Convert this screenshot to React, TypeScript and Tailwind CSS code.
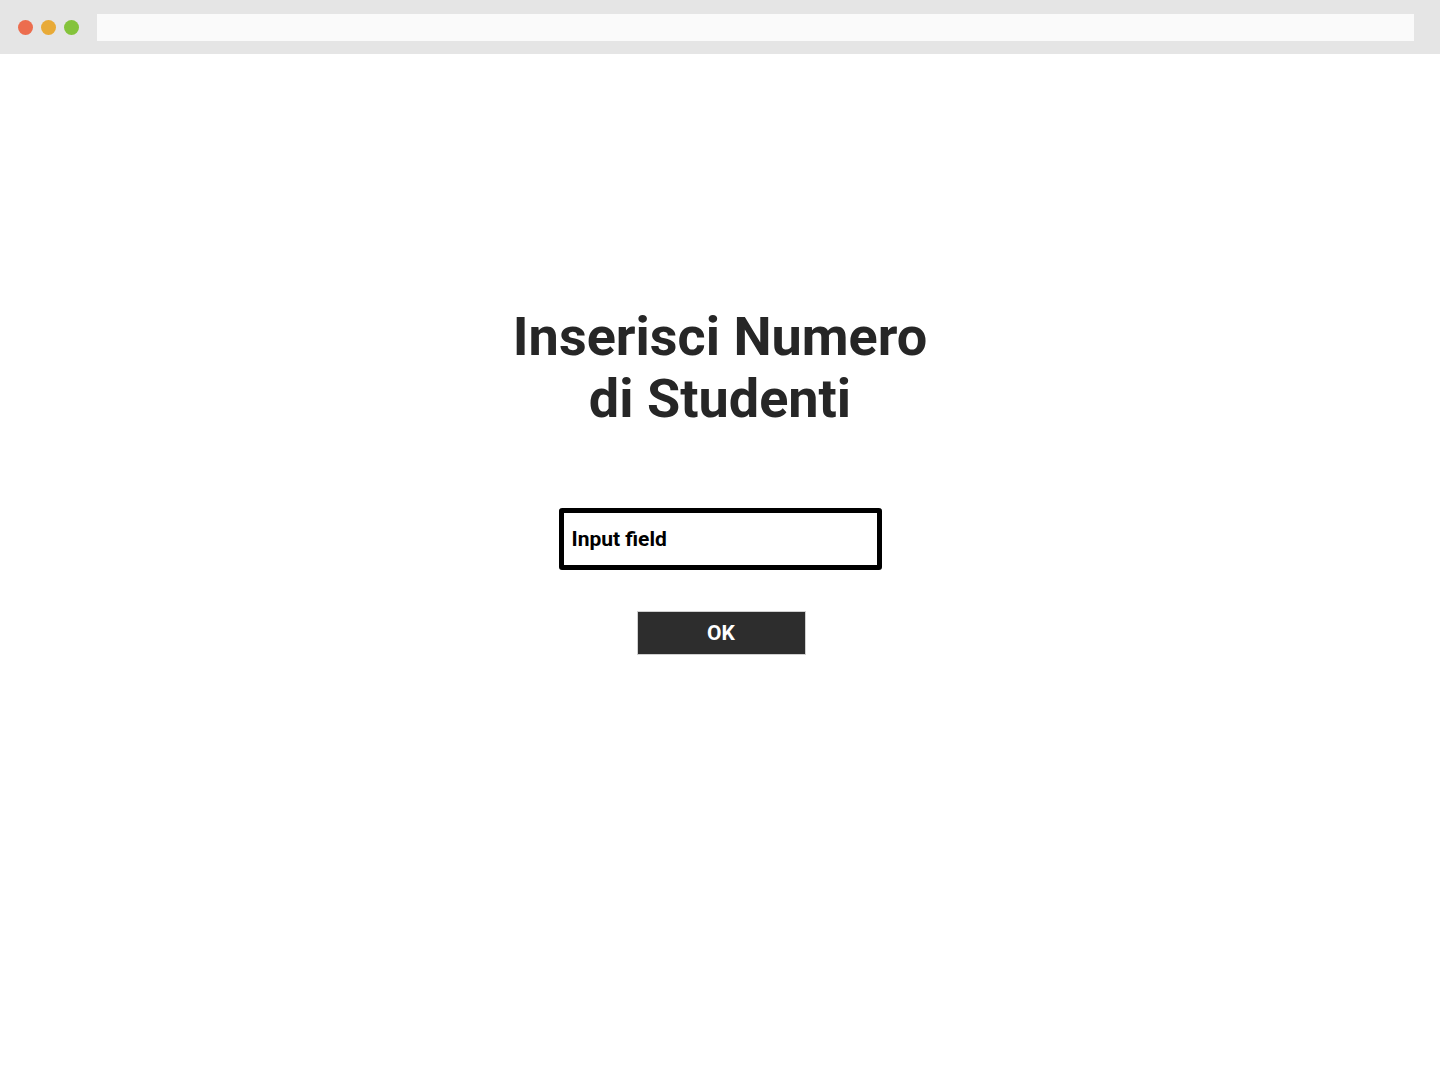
import React from "react";

export default function App() {
  return (
    <div className="min-h-[1078px] w-full bg-white" style={{ fontFamily: "Roboto, 'Liberation Sans', sans-serif" }}>
      <div className="flex h-[54px] items-center bg-[#e5e5e5] pl-[18px] pr-[26px]">
        <div className="flex items-center gap-[8px]">
          <span className="block h-[15px] w-[15px] rounded-full bg-[#ec6d4e]" />
          <span className="block h-[15px] w-[15px] rounded-full bg-[#e8aa37]" />
          <span className="block h-[15px] w-[15px] rounded-full bg-[#84c33b]" />
        </div>
        <div className="ml-[18px] h-[27px] flex-1 bg-[#fafafa]" />
      </div>
      <div className="flex flex-col items-center pt-[252px]">
        <h1 className="text-center text-[54px] font-bold leading-[62px] text-[#262626]">
          Inserisci Numero
          <br />
          di Studenti
        </h1>
        <div className="mt-[78px] flex h-[62px] w-[323px] items-center rounded-[3px] border-[5px] border-black px-[8px] pt-[2px]">
          <span className="text-[21px] font-bold text-black">Input field</span>
        </div>
        <button className="ml-[2px] mt-[41px] flex h-[44px] w-[169px] items-center justify-center border border-[#d0d0d0] bg-[#2d2d2d] pt-[1px] text-[21px] font-bold text-white">
          OK
        </button>
      </div>
    </div>
  );
}
